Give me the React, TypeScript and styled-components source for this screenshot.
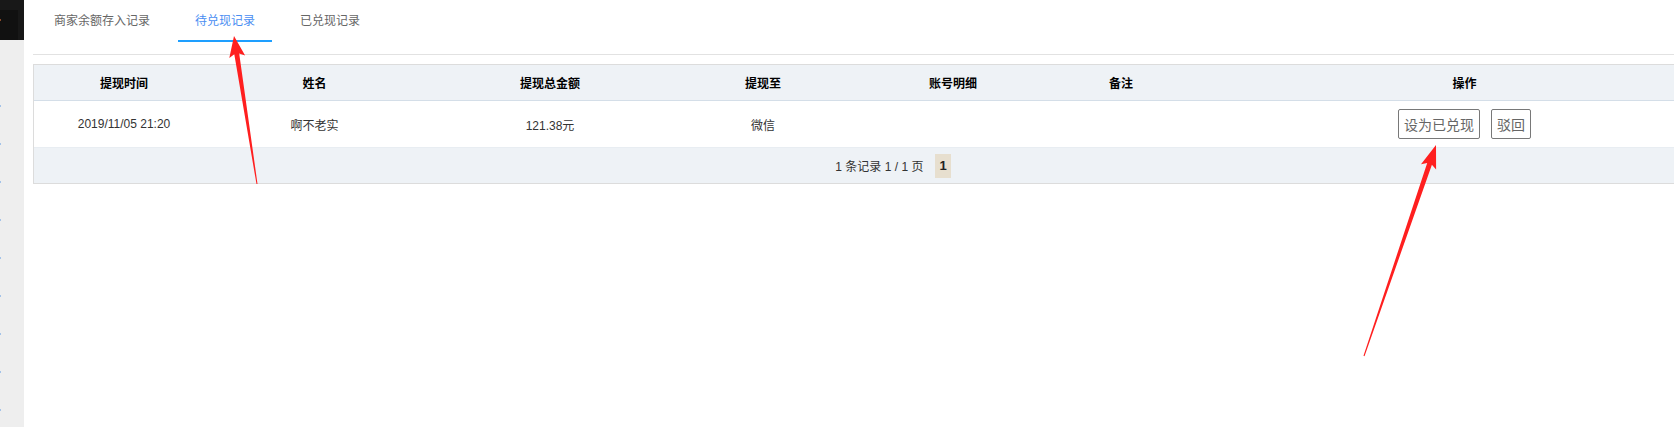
import React from "react";
import styled, { createGlobalStyle } from "styled-components";

const GlobalStyle = createGlobalStyle`
  html, body {
    margin: 0;
    padding: 0;
    background: #ffffff;
    overflow: hidden;
  }
  body {
    font-family: "Liberation Sans", "Noto Sans CJK SC", Arial, sans-serif;
    font-size: 12px;
    color: #333333;
  }
  * { box-sizing: border-box; }
`;

const Page = styled.div`
  position: relative;
  display: flex;
  width: 1674px;
  height: 427px;
  overflow: hidden;
`;

const Sidebar = styled.aside`
  flex: 0 0 24px;
  width: 24px;
  background: #eeeeee;
  display: flex;
  flex-direction: column;
`;

const SideTop = styled.div`
  height: 43px;
  background: #181818;
  padding-top: 10px;
`;

const SideTopInner = styled.div`
  position: relative;
  width: 18px;
  height: 30px;
  background: #111111;
  display: flex;
  align-items: center;
`;

const SideTopMark = styled.span`
  width: 1px;
  height: 2px;
  background: #8a4a2a;
  margin-top: -10px;
`;

const SideMenu = styled.ul`
  list-style: none;
  margin: 0;
  padding: 47px 0 0 0;
`;

const SideItem = styled.li`
  height: 38px;
  display: flex;
  align-items: center;
`;

const SideDot = styled.span`
  width: 1px;
  height: 2px;
  background: #a4c3e8;
`;

const Main = styled.main`
  flex: 1;
  min-width: 0;
  padding-left: 9px;
  overflow: hidden;
`;

const TabBar = styled.div`
  height: 55px;
  border-bottom: 1px solid #e2e2e2;
  display: flex;
  align-items: flex-start;
  padding-left: 4px;
  gap: 11px;
`;

const Tab = styled.div<{ $active?: boolean }>`
  height: 42px;
  line-height: 40px;
  padding: 0 17px;
  font-size: 12px;
  font-family: "Noto Sans CJK SC", "Liberation Sans", sans-serif;
  color: ${(p) => (p.$active ? "#4a8ef2" : "#666666")};
  border-bottom: 2px solid ${(p) => (p.$active ? "#1e9fff" : "transparent")};
  white-space: nowrap;
  cursor: pointer;
`;

const Table = styled.div`
  margin-top: 9px;
  width: 1720px;
  border: 1px solid #dcdcdc;
`;

const columns = "180px 201px 270px 156px 224px 112px 575px";

const HeadRow = styled.div`
  display: grid;
  grid-template-columns: ${columns};
  height: 36px;
  background: #eef2f6;
  border-bottom: 1px solid #d4dee8;
`;

const HeadCell = styled.div`
  display: flex;
  align-items: center;
  justify-content: center;
  font-family: "Noto Sans CJK SC", "Liberation Sans", sans-serif;
  font-weight: 700;
  font-size: 12px;
  color: #000000;
`;

const BodyRow = styled.div`
  display: grid;
  grid-template-columns: ${columns};
  height: 47px;
  background: #ffffff;
  border-bottom: 1px solid #e8edf2;
`;

const Cell = styled.div`
  display: flex;
  align-items: center;
  justify-content: center;
  gap: 11px;
  font-size: 12px;
  color: #333333;
  white-space: nowrap;
`;

const ActionButton = styled.button`
  height: 30px;
  padding: 0 5px;
  border: 1px solid #787878;
  border-radius: 2px;
  background: #ffffff;
  color: #666666;
  font-family: "Noto Sans CJK SC", "Liberation Sans", sans-serif;
  font-size: 14px;
  line-height: 28px;
  cursor: pointer;
`;

const Footer = styled.div`
  height: 35px;
  background: #eef2f6;
  display: flex;
  justify-content: center;
  align-items: center;
  gap: 12px;
`;

const PageInfo = styled.span`
  font-size: 12px;
  color: #333333;
  white-space: pre;
`;

const PageNum = styled.span`
  height: 24px;
  line-height: 24px;
  padding: 0 4px;
  background: #e7dfcf;
  font-size: 13px;
  font-weight: 700;
  color: #222222;
`;

const Overlay = styled.svg`
  position: absolute;
  left: 0;
  top: 0;
  pointer-events: none;
`;

type Pt = [number, number];

function arrowPoints(tail: Pt, tip: Pt, headLen: number, headHalf: number, w0: number, w1: number): string {
  const dx = tip[0] - tail[0];
  const dy = tip[1] - tail[1];
  const L = Math.hypot(dx, dy);
  const ux = dx / L;
  const uy = dy / L;
  const nx = -uy;
  const ny = ux;
  const bx = tip[0] - ux * headLen;
  const by = tip[1] - uy * headLen;
  const wx = bx - ux * 3;
  const wy = by - uy * 3;
  const pts: Pt[] = [
    [tail[0] + (nx * w0) / 2, tail[1] + (ny * w0) / 2],
    [bx + (nx * w1) / 2, by + (ny * w1) / 2],
    [wx + nx * headHalf, wy + ny * headHalf],
    tip,
    [wx - nx * headHalf, wy - ny * headHalf],
    [bx - (nx * w1) / 2, by - (ny * w1) / 2],
    [tail[0] - (nx * w0) / 2, tail[1] - (ny * w0) / 2],
  ];
  return pts.map((p) => `${p[0].toFixed(1)},${p[1].toFixed(1)}`).join(" ");
}

const headers = ["提现时间", "姓名", "提现总金额", "提现至", "账号明细", "备注", "操作"];

const record = {
  time: "2019/11/05 21:20",
  name: "啊不老实",
  amount: "121.38元",
  to: "微信",
  account: "",
  note: "",
};

export default function App() {
  const tabs = [
    { label: "商家余额存入记录", active: false },
    { label: "待兑现记录", active: true },
    { label: "已兑现记录", active: false },
  ];
  return (
    <>
      <GlobalStyle />
      <Page>
        <Sidebar>
          <SideTop>
            <SideTopInner>
              <SideTopMark />
            </SideTopInner>
          </SideTop>
          <SideMenu>
            {Array.from({ length: 9 }).map((_, i) => (
              <SideItem key={i}>
                <SideDot />
              </SideItem>
            ))}
          </SideMenu>
        </Sidebar>
        <Main>
          <TabBar>
            {tabs.map((t) => (
              <Tab key={t.label} $active={t.active}>
                {t.label}
              </Tab>
            ))}
          </TabBar>
          <Table>
            <HeadRow>
              {headers.map((h) => (
                <HeadCell key={h}>{h}</HeadCell>
              ))}
            </HeadRow>
            <BodyRow>
              <Cell>{record.time}</Cell>
              <Cell>{record.name}</Cell>
              <Cell>{record.amount}</Cell>
              <Cell>{record.to}</Cell>
              <Cell>{record.account}</Cell>
              <Cell>{record.note}</Cell>
              <Cell>
                <ActionButton>设为已兑现</ActionButton>
                <ActionButton>驳回</ActionButton>
              </Cell>
            </BodyRow>
            <Footer>
              <PageInfo>1 条记录 1 / 1 页</PageInfo>
              <PageNum>1</PageNum>
            </Footer>
          </Table>
        </Main>
        <Overlay width={1674} height={427} viewBox="0 0 1674 427">
          <polygon points={arrowPoints([257, 184], [234, 36], 18, 8, 1, 5)} fill="#ff1f1f" />
          <polygon points={arrowPoints([1364, 356], [1436, 145], 20, 8, 1, 5)} fill="#ff1f1f" />
        </Overlay>
      </Page>
    </>
  );
}
